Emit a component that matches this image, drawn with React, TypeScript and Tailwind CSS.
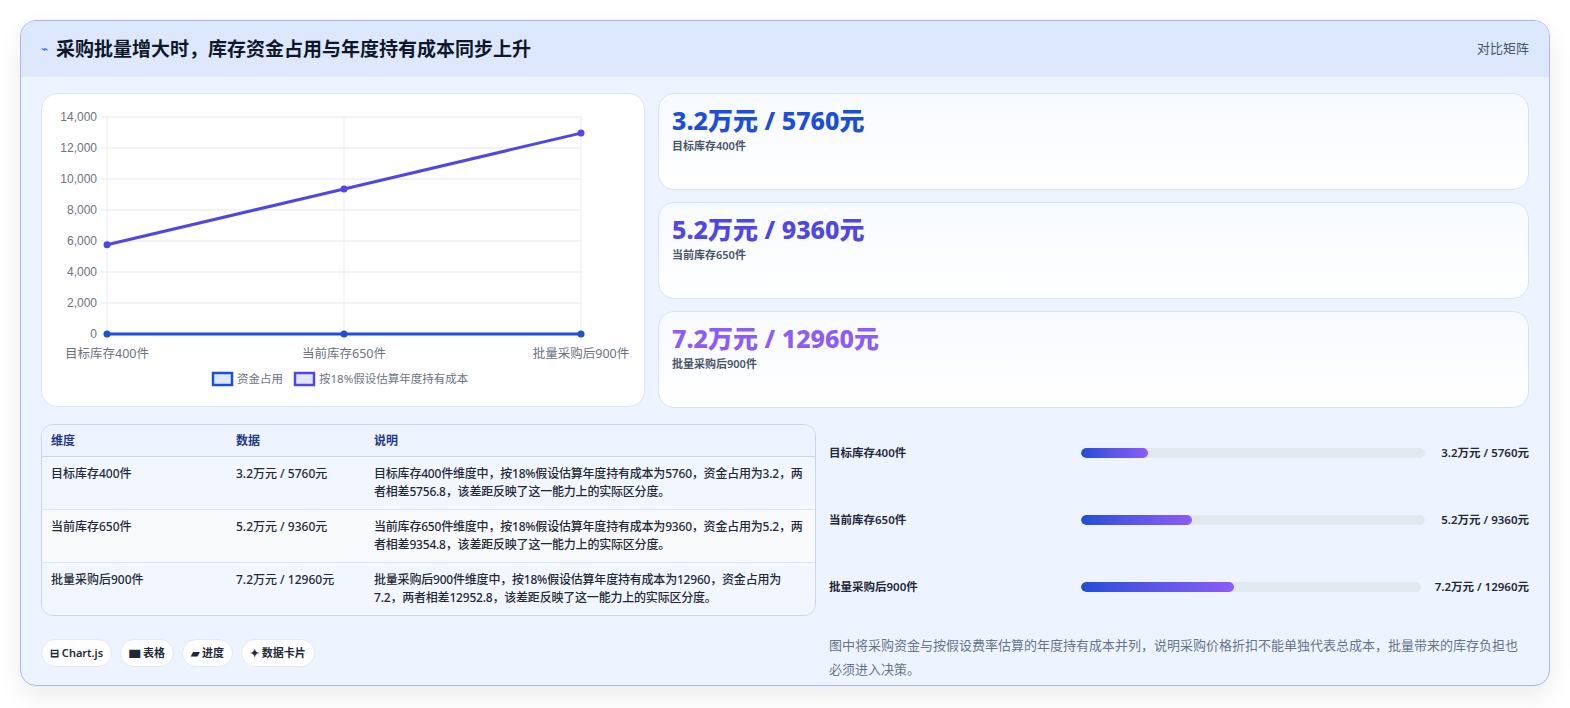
import React from 'react';

const FONT = { fontFamily: '"Noto Sans", "Noto Sans CJK SC", sans-serif' };

const ROWS = [
  { name: '目标库存400件', val: '3.2万元 / 5760元', color: 'text-[#1d4ed8]', pct: 19.6, cost: 5760,
    desc: '目标库存400件维度中，按18%假设估算年度持有成本为5760，资金占用为3.2，两者相差5756.8，该差距反映了这一能力上的实际区分度。' },
  { name: '当前库存650件', val: '5.2万元 / 9360元', color: 'text-[#4f46e5]', pct: 32.4, cost: 9360,
    desc: '当前库存650件维度中，按18%假设估算年度持有成本为9360，资金占用为5.2，两者相差9354.8，该差距反映了这一能力上的实际区分度。' },
  { name: '批量采购后900件', val: '7.2万元 / 12960元', color: 'text-[#8b5cf6]', pct: 45, cost: 12960,
    desc: '批量采购后900件维度中，按18%假设估算年度持有成本为12960，资金占用为7.2，两者相差12952.8，该差距反映了这一能力上的实际区分度。' },
];

function Chart() {
  const x0 = 65, x1 = 539, yTop = 23, yBot = 240;
  const xs = [x0, (x0 + x1) / 2, x1];
  const y = (v: number) => yBot - (v / 14000) * (yBot - yTop);
  const ticks = [0, 2000, 4000, 6000, 8000, 10000, 12000, 14000];
  return (
    <svg width="604" height="314" viewBox="0 0 604 314" className="block">
      {ticks.map((t) => (
        <g key={t}>
          <line x1={x0 - 6} x2={x1} y1={y(t)} y2={y(t)} stroke="#e5e7eb" />
          <text x={x0 - 10} y={y(t) + 4} textAnchor="end" fontSize="12" fill="#6b7280" fontFamily="Liberation Sans, sans-serif">
            {t.toLocaleString('en-US')}
          </text>
        </g>
      ))}
      {xs.map((x) => (
        <line key={x} x1={x} x2={x} y1={yTop} y2={yBot + 6} stroke="#e8ebf3" />
      ))}
      <polyline points={xs.map((x) => `${x},${yBot}`).join(' ')} fill="none" stroke="#1d4ed8" strokeWidth="3" />
      {xs.map((x) => <circle key={'a' + x} cx={x} cy={yBot} r="3.5" fill="#1d4ed8" />)}
      <polyline points={xs.map((x, i) => `${x},${y(ROWS[i].cost)}`).join(' ')} fill="none" stroke="#4f46e5" strokeWidth="3" />
      {xs.map((x, i) => <circle key={'b' + x} cx={x} cy={y(ROWS[i].cost)} r="3.5" fill="#4f46e5" />)}
      {xs.map((x, i) => (
        <text key={'l' + x} x={x} y={264} textAnchor="middle" fontSize="12.5" fill="#6b7280" fontFamily='"Noto Sans", "Noto Sans CJK SC", sans-serif'>
          {ROWS[i].name}
        </text>
      ))}
      <rect x="171" y="279" width="19" height="12" fill="#dbeafe" stroke="#1d4ed8" strokeWidth="2.5" />
      <text x="195" y="289" fontSize="11.5" fill="#6b7280" fontFamily='"Noto Sans", "Noto Sans CJK SC", sans-serif'>资金占用</text>
      <rect x="253" y="279" width="19" height="12" fill="#e0e7ff" stroke="#4f46e5" strokeWidth="2.5" />
      <text x="277" y="289" fontSize="11.5" fill="#6b7280" fontFamily='"Noto Sans", "Noto Sans CJK SC", sans-serif'>按18%假设估算年度持有成本</text>
    </svg>
  );
}

export default function App() {
  return (
    <div className="w-[1570px] h-[708px] bg-white p-5 pb-0" style={FONT}>
      <div className="h-[666px] rounded-2xl border border-[#a9b8ee] bg-[#eef4ff] overflow-hidden shadow-[0_10px_25px_rgba(0,0,0,0.08)]">
        <div className="h-14 bg-[#dde8fd] flex items-center px-5">
          <span className="text-[#2563eb] text-xs mr-2">⌁</span>
          <div className="text-[19px] font-bold text-[#0f172a] flex-1">采购批量增大时，库存资金占用与年度持有成本同步上升</div>
          <div className="text-[13px] text-[#475569]">对比矩阵</div>
        </div>
        <div className="px-5 pt-4 flex flex-col gap-4">
          <div className="flex gap-[13px]">
            <div className="w-[604px] h-[314px] bg-white rounded-2xl border border-[#dbe4f5] shrink-0">
              <Chart />
            </div>
            <div className="flex-1 flex flex-col gap-3">
              {ROWS.map((r) => (
                <div key={r.name} className="h-[97px] rounded-2xl border border-[#d6e2fa] bg-gradient-to-b from-[#f7faff] to-white px-[13px] pt-2">
                  <div className={`text-[25px] font-extrabold leading-[36px] ${r.color}`}>{r.val}</div>
                  <div className="text-[11px] font-semibold text-[#475569]">{r.name}</div>
                </div>
              ))}
            </div>
          </div>
          <div className="flex gap-[13px]">
            <div className="w-[775px] shrink-0 flex flex-col">
              <div className="rounded-xl border border-[#c9d5ea] overflow-hidden text-[12px] text-[#1f2937]">
                <div className="grid grid-cols-[185px_138px_1fr] bg-[#eef4ff] border-b border-[#c9d5ea] h-8 items-center px-[9px] font-semibold text-[#1e3a8a]">
                  <div>维度</div><div>数据</div><div>说明</div>
                </div>
                {ROWS.map((r, i) => (
                  <div key={r.name} className={`grid grid-cols-[185px_138px_1fr] px-[9px] py-2 leading-[18px] font-medium ${i === 1 ? 'bg-[#f8fafc]' : 'bg-[#f1f6ff]'} ${i < 2 ? 'border-b border-[#dde5f3]' : ''}`}>
                    <div>{r.name}</div>
                    <div>{r.val}</div>
                    <div className="tracking-[-0.2px]">{r.desc}</div>
                  </div>
                ))}
              </div>
              <div className="flex gap-2 mt-[23px]">
                {['⊟ Chart.js', '▆ 表格', '▰ 进度', '✦ 数据卡片'].map((t) => (
                  <div key={t} className="h-7 px-2 rounded-full bg-white border border-[#e2e8f0] text-[11px] font-semibold text-[#1f2937] flex items-center">{t}</div>
                ))}
              </div>
            </div>
            <div className="flex-1 flex flex-col">
              <div className="flex flex-col gap-[49px] pt-[20px]">
                {ROWS.map((r, i) => (
                  <div key={r.name} className="grid grid-cols-[244px_1fr_auto] items-center gap-2 h-[18px] text-[11.5px] font-semibold text-[#1f2937]">
                    <div>{r.name}</div>
                    <div className="h-[10px] rounded-full bg-[#e2e8f0] overflow-hidden">
                      <div className="h-full rounded-full bg-gradient-to-r from-[#1d4ed8] to-[#8b5cf6]" style={{ width: `${r.pct}%` }} />
                    </div>
                    <div className={i === 2 ? 'w-[100px] text-right' : 'w-[96px] text-right'}>{r.val}</div>
                  </div>
                ))}
              </div>
              <div className="mt-[37px] text-[13px] leading-[24px] text-[#64748b]">
                图中将采购资金与按假设费率估算的年度持有成本并列，说明采购价格折扣不能单独代表总成本，批量带来的库存负担也必须进入决策。
              </div>
            </div>
          </div>
        </div>
      </div>
    </div>
  );
}
